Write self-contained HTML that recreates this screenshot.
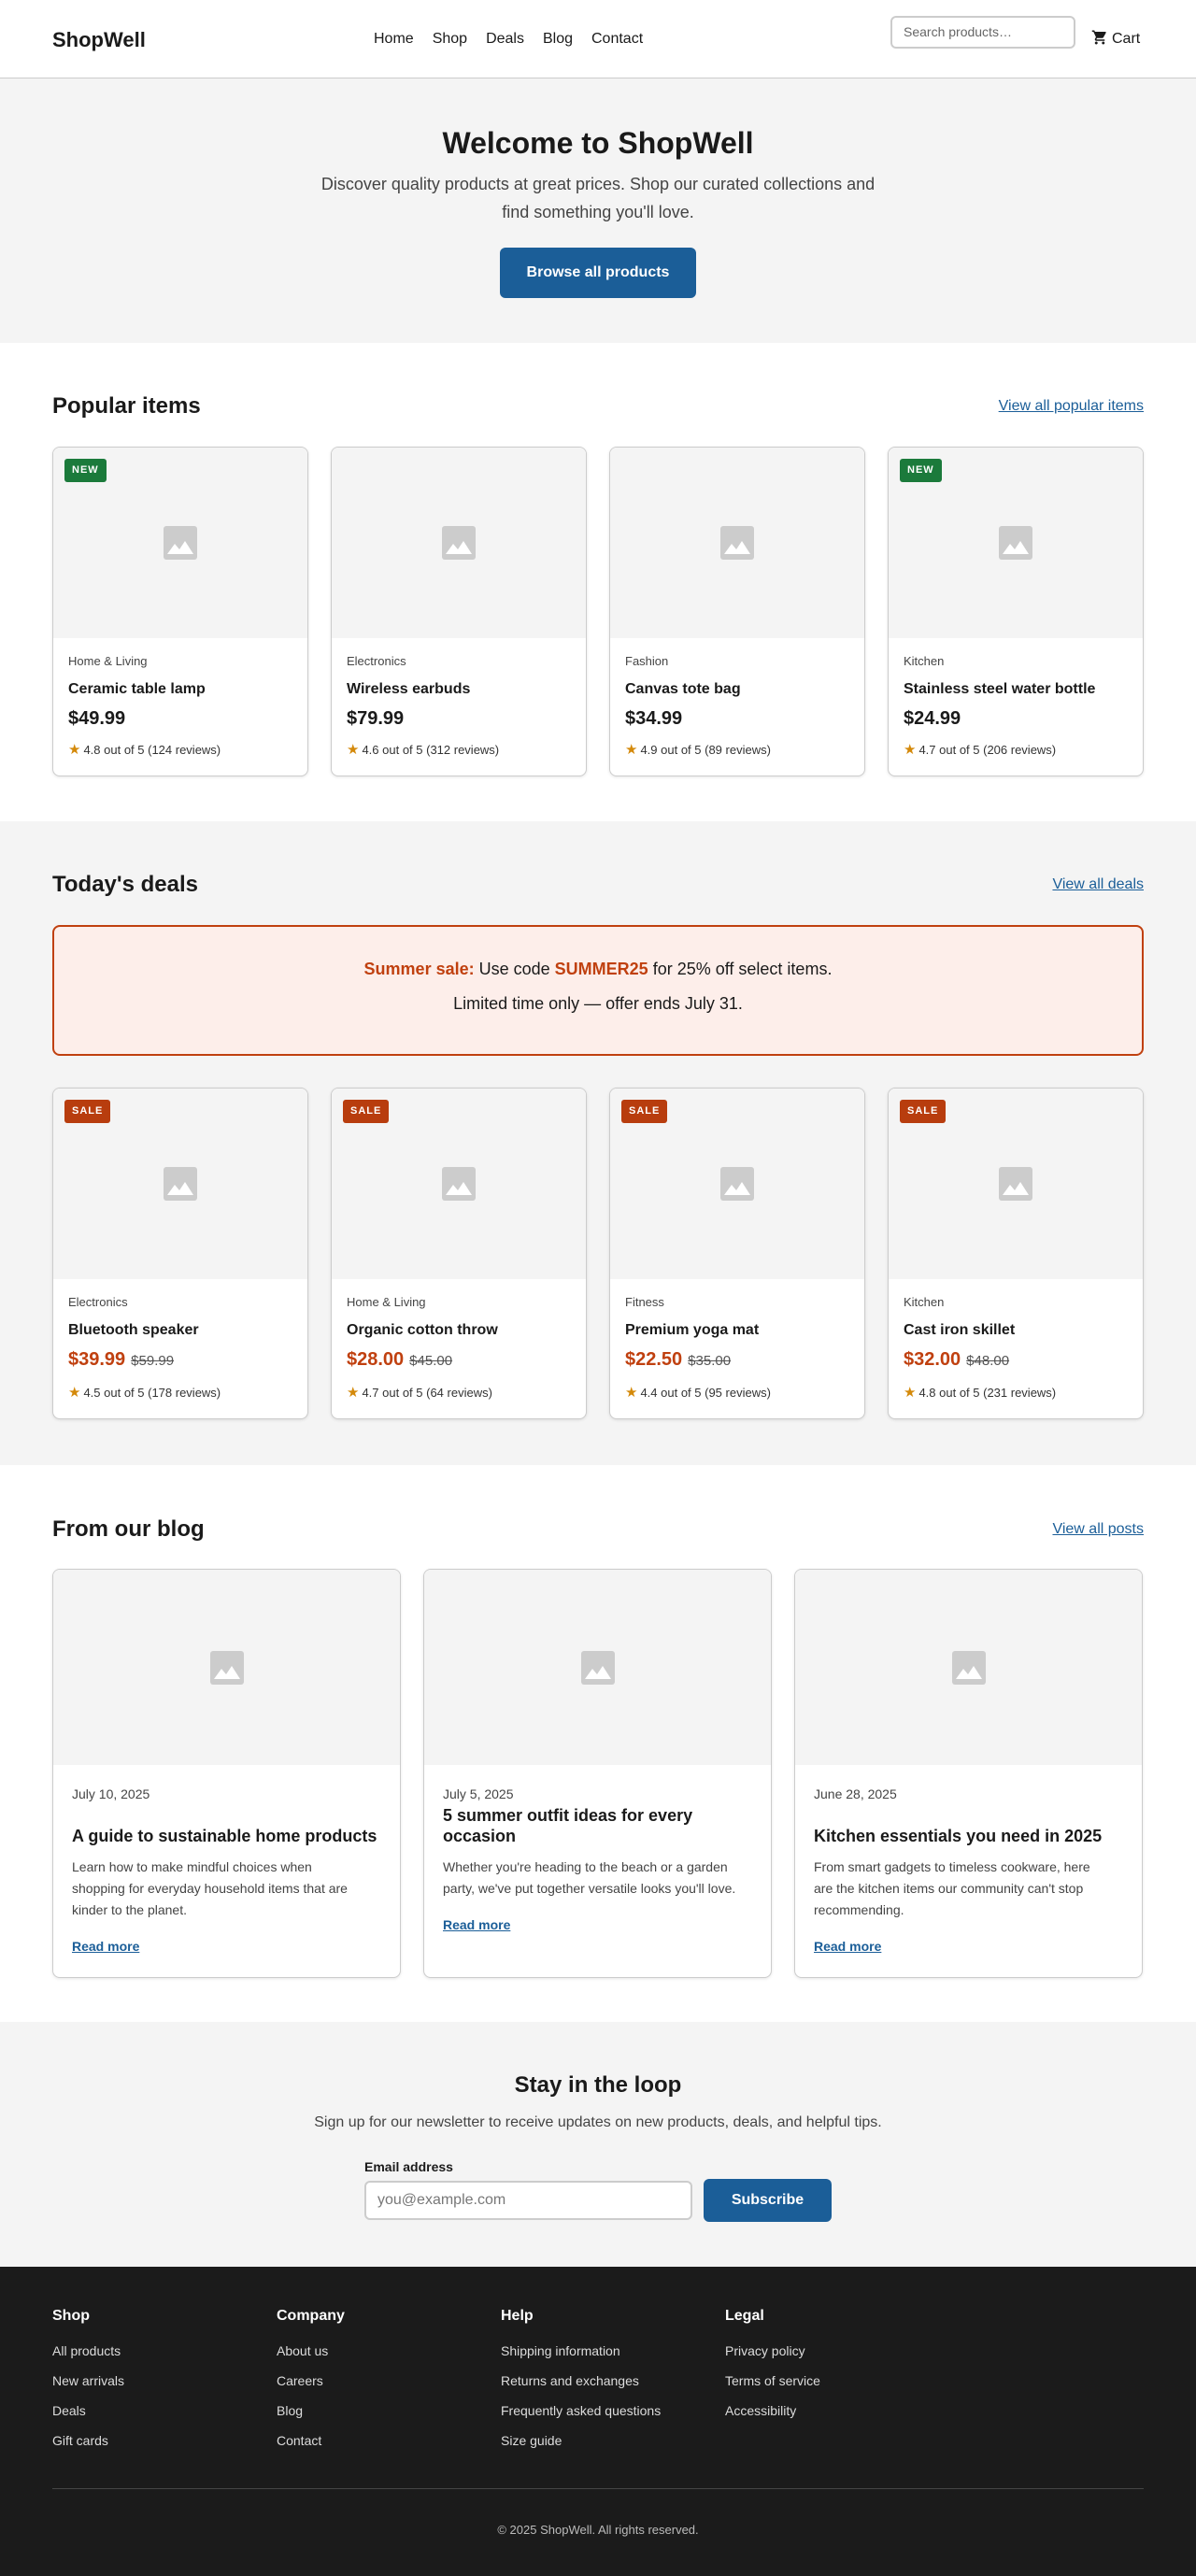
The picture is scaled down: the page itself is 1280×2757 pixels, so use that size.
<!DOCTYPE html>
<html><head><meta charset="utf-8"><style>
*{box-sizing:border-box;margin:0;padding:0}
body{width:1280px;font-family:"Liberation Sans",Arial,sans-serif;color:#1a1a1a;background:#fff}
a{color:inherit;text-decoration:none}
.wrap{width:1168px;margin:0 auto}
header{height:84px;border-bottom:1px solid #ccc;position:relative}
.logo{position:absolute;left:56px;top:29px;font-size:22px;font-weight:bold;line-height:28px}
nav{position:absolute;left:400px;top:31px;font-size:16px;line-height:22px}
nav a{margin-right:20px}
.search{position:absolute;left:953px;top:17px;width:198px;height:35px;border:2px solid #ccc;border-radius:6px;font-size:14px;color:#666;padding:7px 12px}
.cart{position:absolute;left:1168px;top:31px;font-size:16px;line-height:22px}
.cart svg{vertical-align:-3px;margin-right:4px}
.hero{height:283px;background:#f4f4f4;text-align:center;position:relative}
.hero h1{position:absolute;top:49px;left:0;right:0;font-size:32px;line-height:40px}
.hero p{position:absolute;top:98px;left:340px;width:600px;font-size:18px;line-height:30px;color:#444}
.btn{position:absolute;left:535px;top:181px;width:210px;height:54px;background:#1b5e98;color:#fff;border-radius:6px;font-weight:bold;font-size:16px;line-height:54px}
.sec{padding:52px 0 48px}
.gray{background:#f4f4f4}
.sh{display:flex;justify-content:space-between;align-items:center;height:32px;margin-bottom:27px}
.sh h2{font-size:24px;line-height:32px}
.sh a{color:#1b5e98;text-decoration:underline;font-size:16px}
.grid4{display:grid;grid-template-columns:repeat(4,274px);gap:24px}
.card{background:#fff;border:1px solid #ccc;border-radius:8px;overflow:hidden;box-shadow:0 1px 3px rgba(0,0,0,.1)}
.img{height:204px;background:#f4f4f4;position:relative;display:flex;align-items:center;justify-content:center}
.badge{position:absolute;left:12px;top:12px;color:#fff;font-size:11px;font-weight:bold;letter-spacing:1px;padding:0 8px;height:25px;line-height:25px;border-radius:3px}
.new{background:#1b7a3b}.sale{background:#b83d0e}
.body{padding:16px 16px 18px}
.cat{font-size:13px;line-height:18px;color:#444}
.t{font-size:16px;font-weight:bold;line-height:22px;margin-top:10px}
.pr{font-size:20px;font-weight:bold;line-height:28px;margin-top:6px}
.pr.s{color:#c0400f}
.pr del{font-size:15px;font-weight:normal;color:#555;margin-left:6px}
.rt{font-size:13px;line-height:18px;color:#333;margin-top:11px}
.rt b{color:#d4890a;font-weight:normal;font-size:15px;margin-right:3px}
.banner{height:140px;border:2px solid #c0400f;border-radius:8px;background:#fdeeea;text-align:center;font-size:18px;line-height:28px;padding-top:31px;margin-bottom:34px}
.banner p+p{margin-top:9px}
.banner .o{color:#c0400f;font-weight:bold}
.grid3{display:grid;grid-template-columns:repeat(3,373px);gap:24px}
.bimg{height:209px;background:#f4f4f4;display:flex;align-items:center;justify-content:center}
.bb{padding:21px 20px 23px}
.date{font-size:14px;line-height:20px;color:#444}
.bt{font-size:18px;font-weight:bold;line-height:22px;height:45px;margin-top:1px;display:flex;align-items:flex-end}
.bd{font-size:14px;line-height:23px;color:#444;margin-top:11px;padding-right:16px}
.rm{display:block;margin-top:17px;font-size:14px;line-height:20px;color:#1b5e98;text-decoration:underline;font-weight:bold}
.news{background:#f4f4f4;height:262px;text-align:center;padding-top:52px}
.news h2{font-size:24px;line-height:32px}
.news .sub{font-size:16px;line-height:24px;color:#444;margin-top:12px}
.form{width:500px;margin:25px auto 0;text-align:left}
.form label{display:block;font-size:14px;font-weight:bold;line-height:20px}
.row{display:flex;align-items:center;margin-top:3px}
.inp{width:351px;height:42px;border:2px solid #ccc;border-radius:6px;background:#fff;font-size:16px;color:#777;padding:10px 12px;line-height:18px}
.sub2{margin-left:12px;width:137px;height:46px;background:#1b5e98;color:#fff;border-radius:6px;font-weight:bold;font-size:16px;line-height:46px;text-align:center}
footer{background:#1b1b1b;height:331px;padding-top:42px;color:#fff}
.cols{display:flex}
.col{width:240px}
.col h4{font-size:16px;line-height:22px}
.col a{display:block;font-size:14px;line-height:20px;color:#ddd;margin-top:12px}
.col h4+a{margin-top:16px}
.div{border-top:1px solid #444;margin-top:41px}
.copy{text-align:center;font-size:13px;line-height:18px;color:#bbb;margin-top:35px}
</style></head><body>
<svg width="0" height="0" style="position:absolute"><defs><symbol id="ph" viewBox="0 0 36 36"><rect width="36" height="36" rx="3" fill="#ccc"/><path d="M4 30 L12 19 L17 25 L23 16 L32 30 Z" fill="#fff"/></symbol></defs></svg>
<header>
<div class="logo">ShopWell</div>
<nav><a>Home</a><a>Shop</a><a>Deals</a><a>Blog</a><a>Contact</a></nav>
<div class="search">Search products…</div>
<div class="cart"><svg width="18" height="18" viewBox="0 0 24 24"><path fill="#1a1a1a" d="M7 18c-1.1 0-2 .9-2 2s.9 2 2 2 2-.9 2-2-.9-2-2-2zM1 2v2h2l3.6 7.6-1.4 2.4c-.1.3-.2.6-.2 1 0 1.1.9 2 2 2h12v-2H7.4c-.1 0-.2-.1-.2-.2v-.1l.9-1.7h7.4c.8 0 1.4-.4 1.700-1l3.6-6.5c.1-.2.1-.3.1-.5 0-.6-.4-1-1-1H5.2l-.9-2H1zm16 16c-1.1 0-2 .9-2 2s.9 2 2 2 2-.9 2-2-.9-2-2-2z"/></svg>Cart</div>
</header>
<section class="hero">
<h1>Welcome to ShopWell</h1>
<p>Discover quality products at great prices. Shop our curated collections and find something you'll love.</p>
<a class="btn">Browse all products</a>
</section>

<section class="sec"><div class="wrap">
<div class="sh"><h2>Popular items</h2><a>View all popular items</a></div>
<div class="grid4">
<div class="card"><div class="img"><span class="badge new">NEW</span><svg width="36" height="36"><use href="#ph"/></svg></div><div class="body"><div class="cat">Home &amp; Living</div><div class="t">Ceramic table lamp</div><div class="pr">$49.99</div><div class="rt"><b>★</b>4.8 out of 5 (124 reviews)</div></div></div>
<div class="card"><div class="img"><svg width="36" height="36"><use href="#ph"/></svg></div><div class="body"><div class="cat">Electronics</div><div class="t">Wireless earbuds</div><div class="pr">$79.99</div><div class="rt"><b>★</b>4.6 out of 5 (312 reviews)</div></div></div>
<div class="card"><div class="img"><svg width="36" height="36"><use href="#ph"/></svg></div><div class="body"><div class="cat">Fashion</div><div class="t">Canvas tote bag</div><div class="pr">$34.99</div><div class="rt"><b>★</b>4.9 out of 5 (89 reviews)</div></div></div>
<div class="card"><div class="img"><span class="badge new">NEW</span><svg width="36" height="36"><use href="#ph"/></svg></div><div class="body"><div class="cat">Kitchen</div><div class="t">Stainless steel water bottle</div><div class="pr">$24.99</div><div class="rt"><b>★</b>4.7 out of 5 (206 reviews)</div></div></div>
</div></div></section>

<section class="sec gray" style="padding-bottom:49px"><div class="wrap">
<div class="sh"><h2>Today's deals</h2><a>View all deals</a></div>
<div class="banner"><p><span class="o">Summer sale:</span> Use code <span class="o">SUMMER25</span> for 25% off select items.</p><p>Limited time only — offer ends July 31.</p></div>
<div class="grid4">
<div class="card"><div class="img"><span class="badge sale">SALE</span><svg width="36" height="36"><use href="#ph"/></svg></div><div class="body"><div class="cat">Electronics</div><div class="t">Bluetooth speaker</div><div class="pr s">$39.99<del>$59.99</del></div><div class="rt"><b>★</b>4.5 out of 5 (178 reviews)</div></div></div>
<div class="card"><div class="img"><span class="badge sale">SALE</span><svg width="36" height="36"><use href="#ph"/></svg></div><div class="body"><div class="cat">Home &amp; Living</div><div class="t">Organic cotton throw</div><div class="pr s">$28.00<del>$45.00</del></div><div class="rt"><b>★</b>4.7 out of 5 (64 reviews)</div></div></div>
<div class="card"><div class="img"><span class="badge sale">SALE</span><svg width="36" height="36"><use href="#ph"/></svg></div><div class="body"><div class="cat">Fitness</div><div class="t">Premium yoga mat</div><div class="pr s">$22.50<del>$35.00</del></div><div class="rt"><b>★</b>4.4 out of 5 (95 reviews)</div></div></div>
<div class="card"><div class="img"><span class="badge sale">SALE</span><svg width="36" height="36"><use href="#ph"/></svg></div><div class="body"><div class="cat">Kitchen</div><div class="t">Cast iron skillet</div><div class="pr s">$32.00<del>$48.00</del></div><div class="rt"><b>★</b>4.8 out of 5 (231 reviews)</div></div></div>
</div></div></section>

<section class="sec" style="padding-top:53px;padding-bottom:47px"><div class="wrap">
<div class="sh" style="margin-bottom:26px"><h2>From our blog</h2><a>View all posts</a></div>
<div class="grid3">
<div class="card"><div class="bimg"><svg width="36" height="36"><use href="#ph"/></svg></div><div class="bb"><div class="date">July 10, 2025</div><div class="bt">A guide to sustainable home products</div><div class="bd">Learn how to make mindful choices when shopping for everyday household items that are kinder to the planet.</div><a class="rm">Read more</a></div></div>
<div class="card"><div class="bimg"><svg width="36" height="36"><use href="#ph"/></svg></div><div class="bb"><div class="date">July 5, 2025</div><div class="bt">5 summer outfit ideas for every occasion</div><div class="bd">Whether you're heading to the beach or a garden party, we've put together versatile looks you'll love.</div><a class="rm">Read more</a></div></div>
<div class="card"><div class="bimg"><svg width="36" height="36"><use href="#ph"/></svg></div><div class="bb"><div class="date">June 28, 2025</div><div class="bt">Kitchen essentials you need in 2025</div><div class="bd">From smart gadgets to timeless cookware, here are the kitchen items our community can't stop recommending.</div><a class="rm">Read more</a></div></div>
</div></div></section>

<section class="news">
<h2>Stay in the loop</h2>
<p class="sub">Sign up for our newsletter to receive updates on new products, deals, and helpful tips.</p>
<div class="form"><label>Email address</label><div class="row"><div class="inp">you@example.com</div><div class="sub2">Subscribe</div></div></div>
</section>

<footer><div class="wrap">
<div class="cols">
<div class="col"><h4>Shop</h4><a>All products</a><a>New arrivals</a><a>Deals</a><a>Gift cards</a></div>
<div class="col"><h4>Company</h4><a>About us</a><a>Careers</a><a>Blog</a><a>Contact</a></div>
<div class="col"><h4>Help</h4><a>Shipping information</a><a>Returns and exchanges</a><a>Frequently asked questions</a><a>Size guide</a></div>
<div class="col"><h4>Legal</h4><a>Privacy policy</a><a>Terms of service</a><a>Accessibility</a></div>
</div>
<div class="div"></div>
<p class="copy">© 2025 ShopWell. All rights reserved.</p>
</div></footer>
</body></html>
